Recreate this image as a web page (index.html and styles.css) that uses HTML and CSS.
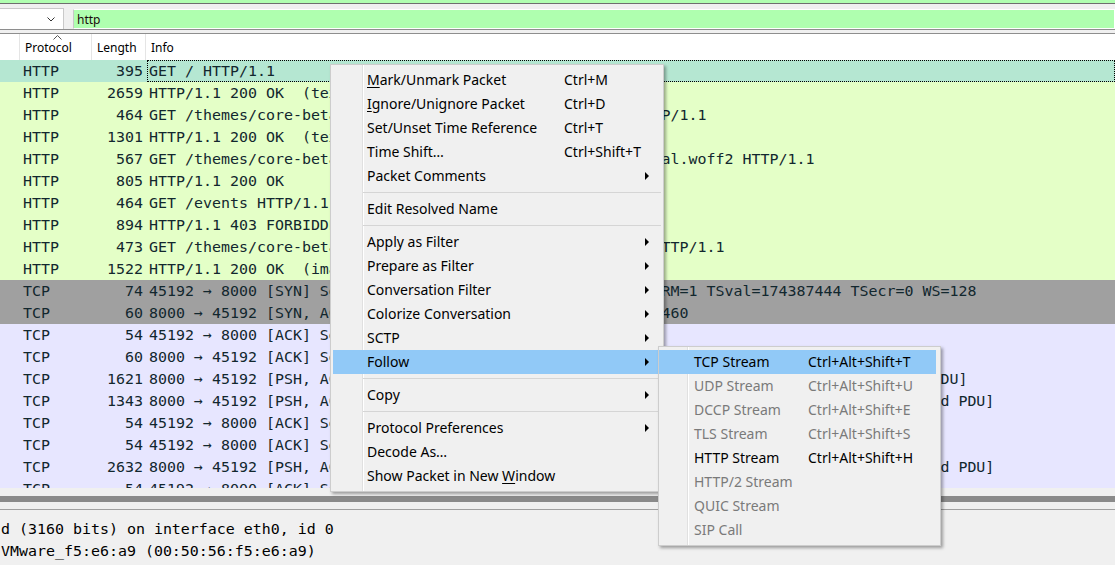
FILE: index.html
```html
<!DOCTYPE html>
<html>
<head>
<meta charset="utf-8">
<link rel="stylesheet" href="styles.css">
</head>
<body>
<div class="app">
  <div class="topstrip"></div>
  <div class="toolbar">
    <div class="combo">
      <svg class="chev" width="8" height="5" viewBox="0 0 8 5"><polyline points="0.5,0.5 4,4 7.5,0.5" fill="none" stroke="#333" stroke-width="1"/></svg>
    </div>
    <div class="filter">http</div>
  </div>
  <div class="gap"></div>
  <div class="header">
    <div class="h0"></div>
    <div class="hc hproto">Protocol<svg class="sort" width="9" height="5" viewBox="0 0 9 5"><polyline points="0.5,4.5 4.5,0.5 8.5,4.5" fill="none" stroke="#555" stroke-width="1"/></svg></div>
    <div class="hc hlen">Length</div>
    <div class="hc hinfo">Info</div>
  </div>
  <div class="rows">
    <div class="r h sel"><span class="c0"></span><span class="pr">HTTP</span><span class="ln">395</span><span class="in focus">GET / HTTP/1.1</span></div>
    <div class="r h"><span class="c0"></span><span class="pr">HTTP</span><span class="ln">2659</span><span class="in">HTTP/1.1 200 OK  (text/html)</span></div>
    <div class="r h"><span class="c0"></span><span class="pr">HTTP</span><span class="ln">464</span><span class="in">GET /themes/core-beta/static/assets/main.06a2a5b1.css HTTP/1.1</span></div>
    <div class="r h"><span class="c0"></span><span class="pr">HTTP</span><span class="ln">1301</span><span class="in">HTTP/1.1 200 OK  (text/css)</span></div>
    <div class="r h"><span class="c0"></span><span class="pr">HTTP</span><span class="ln">567</span><span class="in">GET /themes/core-beta/static/webfonts/lato-latin-400-normal.woff2 HTTP/1.1</span></div>
    <div class="r h"><span class="c0"></span><span class="pr">HTTP</span><span class="ln">805</span><span class="in">HTTP/1.1 200 OK</span></div>
    <div class="r h"><span class="c0"></span><span class="pr">HTTP</span><span class="ln">464</span><span class="in">GET /events HTTP/1.1</span></div>
    <div class="r h"><span class="c0"></span><span class="pr">HTTP</span><span class="ln">894</span><span class="in">HTTP/1.1 403 FORBIDDEN  (text/html)</span></div>
    <div class="r h"><span class="c0"></span><span class="pr">HTTP</span><span class="ln">473</span><span class="in">GET /themes/core-beta/static/img/favicon.ico?d=8b5f4a21 HTTP/1.1</span></div>
    <div class="r h"><span class="c0"></span><span class="pr">HTTP</span><span class="ln">1522</span><span class="in">HTTP/1.1 200 OK  (image/png)</span></div>
    <div class="r g"><span class="c0"></span><span class="pr">TCP</span><span class="ln">74</span><span class="in">45192 → 8000 [SYN] Seq=0 Win=64240 Len=0 MSS=1460 SACK_PERM=1 TSval=174387444 TSecr=0 WS=128</span></div>
    <div class="r g"><span class="c0"></span><span class="pr">TCP</span><span class="ln">60</span><span class="in">8000 → 45192 [SYN, ACK] Seq=0 Ack=1 Win=64240 Len=0 MSS=1460</span></div>
    <div class="r t"><span class="c0"></span><span class="pr">TCP</span><span class="ln">54</span><span class="in">45192 → 8000 [ACK] Seq=1 Ack=1 Win=64240 Len=0</span></div>
    <div class="r t"><span class="c0"></span><span class="pr">TCP</span><span class="ln">60</span><span class="in">8000 → 45192 [ACK] Seq=1 Ack=400 Win=63841 Len=0</span></div>
    <div class="r t"><span class="c0"></span><span class="pr">TCP</span><span class="ln">1621</span><span class="in">8000 → 45192 [PSH, ACK] Seq=1 Ack=400 Win=64128 Len=1567 [TCP segment of a reassembled PDU]</span></div>
    <div class="r t"><span class="c0"></span><span class="pr">TCP</span><span class="ln">1343</span><span class="in">8000 → 45192 [PSH, ACK] Seq=1568 Ack=400 Win=64128 Len=1289 [TCP segment of a reassembled PDU]</span></div>
    <div class="r t"><span class="c0"></span><span class="pr">TCP</span><span class="ln">54</span><span class="in">45192 → 8000 [ACK] Seq=400 Ack=1568 Win=63488 Len=0</span></div>
    <div class="r t"><span class="c0"></span><span class="pr">TCP</span><span class="ln">54</span><span class="in">45192 → 8000 [ACK] Seq=400 Ack=2857 Win=62592 Len=0</span></div>
    <div class="r t"><span class="c0"></span><span class="pr">TCP</span><span class="ln">2632</span><span class="in">8000 → 45192 [PSH, ACK] Seq=2857 Ack=400 Win=64128 Len=2578 [TCP segment of a reassembled PDU]</span></div>
    <div class="r t"><span class="c0"></span><span class="pr">TCP</span><span class="ln">54</span><span class="in">45192 → 8000 [ACK] Seq=400 Ack=5435 Win=62592 Len=0</span></div>
  </div>
  <div class="split"><div class="split-bar"></div></div>
  <div class="details">
    <div class="d">d (3160 bits) on interface eth0, id 0</div>
    <div class="d">VMware_f5:e6:a9 (00:50:56:f5:e6:a9)</div>
  </div>
</div>

<div class="menu">
  <div class="item"><span class="lbl"><u>M</u>ark/Unmark Packet</span><span class="key">Ctrl+M</span></div>
  <div class="item"><span class="lbl"><u>I</u>gnore/Unignore Packet</span><span class="key">Ctrl+D</span></div>
  <div class="item"><span class="lbl">Set/Unset Time Reference</span><span class="key">Ctrl+T</span></div>
  <div class="item"><span class="lbl">Time Shift…</span><span class="key">Ctrl+Shift+T</span></div>
  <div class="item"><span class="lbl">Packet Comments</span><span class="key"></span><span class="arr"></span></div>
  <div class="sep"></div>
  <div class="item"><span class="lbl">Edit Resolved Name</span><span class="key"></span></div>
  <div class="sep"></div>
  <div class="item"><span class="lbl">Apply as Filter</span><span class="key"></span><span class="arr"></span></div>
  <div class="item"><span class="lbl">Prepare as Filter</span><span class="key"></span><span class="arr"></span></div>
  <div class="item"><span class="lbl">Conversation Filter</span><span class="key"></span><span class="arr"></span></div>
  <div class="item"><span class="lbl">Colorize Conversation</span><span class="key"></span><span class="arr"></span></div>
  <div class="item"><span class="lbl">SCTP</span><span class="key"></span><span class="arr"></span></div>
  <div class="item hl"><span class="lbl">Follow</span><span class="key"></span><span class="arr"></span></div>
  <div class="sep"></div>
  <div class="item"><span class="lbl">Copy</span><span class="key"></span><span class="arr"></span></div>
  <div class="sep"></div>
  <div class="item"><span class="lbl">Protocol Preferences</span><span class="key"></span><span class="arr"></span></div>
  <div class="item"><span class="lbl">Decode As…</span><span class="key"></span></div>
  <div class="item"><span class="lbl">Show Packet in New <u>W</u>indow</span><span class="key"></span></div>
</div>

<div class="menu sub">
  <div class="item hl"><span class="lbl">TCP Stream</span><span class="key">Ctrl+Alt+Shift+T</span></div>
  <div class="item dis"><span class="lbl">UDP Stream</span><span class="key">Ctrl+Alt+Shift+U</span></div>
  <div class="item dis"><span class="lbl">DCCP Stream</span><span class="key">Ctrl+Alt+Shift+E</span></div>
  <div class="item dis"><span class="lbl">TLS Stream</span><span class="key">Ctrl+Alt+Shift+S</span></div>
  <div class="item"><span class="lbl">HTTP Stream</span><span class="key">Ctrl+Alt+Shift+H</span></div>
  <div class="item dis"><span class="lbl">HTTP/2 Stream</span><span class="key"></span></div>
  <div class="item dis"><span class="lbl">QUIC Stream</span><span class="key"></span></div>
  <div class="item dis"><span class="lbl">SIP Call</span><span class="key"></span></div>
</div>
</body>
</html>
```

FILE: styles.css
```css
html, body {
  margin: 0;
  padding: 0;
}
body {
  width: 1115px;
  height: 565px;
  overflow: hidden;
  position: relative;
  background: #f0f0f0;
  font-family: "Noto Sans", "DejaVu Sans", sans-serif;
  color: #000;
}
.app {
  display: flex;
  flex-direction: column;
  width: 1115px;
  height: 565px;
  overflow: hidden;
}
.topstrip {
  height: 3px;
  flex: none;
  background: #b0ffb0;
  border-bottom: 1px solid #6e6e6e;
}
.toolbar {
  height: 25px;
  flex: none;
  display: flex;
  align-items: flex-start;
  background: #f0f0f0;
  border-bottom: 1px solid #8e8e8e;
}
.combo {
  box-sizing: border-box;
  width: 64px;
  height: 21px;
  margin-top: 4px;
  background: #fff;
  border: 1px solid #c9c9c9;
  border-left: none;
  border-bottom: none;
  display: flex;
  align-items: center;
  justify-content: flex-end;
  padding-right: 8px;
}
.chev {
  display: block;
  margin-top: 1px;
}
.filter {
  box-sizing: border-box;
  flex: 1;
  height: 20px;
  margin-top: 5px;
  margin-left: 9px;
  background: #afffaf;
  border: 1px solid #fff;
  border-left-color: #c8c8c8;
  font-size: 12px;
  line-height: 18px;
  padding-left: 3px;
  padding-top: 1px;
  color: #1a0a0a;
}
.gap {
  height: 3px;
  flex: none;
}
.header {
  height: 26px;
  flex: none;
  display: flex;
  background: #fff;
  border-top: 1px solid #8e8e8e;
  font-size: 12px;
  color: #000;
}
.h0 {
  width: 19px;
  flex: none;
}
.hc {
  position: relative;
  border-left: 1px solid #e5e5e5;
  padding-left: 5px;
  padding-top: 1px;
  line-height: 26px;
  flex: none;
}
.hproto { width: 66px; }
.hlen { width: 48px; }
.hinfo { flex: 1; }
.sort {
  position: absolute;
  left: 33px;
  top: 1px;
}
.rows {
  height: 428px;
  flex: none;
  overflow: hidden;
  font-family: "DejaVu Sans Mono", "Liberation Mono", monospace;
  font-size: 14.95px;
  color: #12272e;
}
.r {
  height: 22px;
  line-height: 22px;
  display: flex;
  white-space: pre;
}
.r.h { background: #e4ffc7; }
.r.g { background: #a0a0a0; }
.r.t { background: #e7e6ff; }
.r.sel { background: #b5e7d2; }
.c0 { width: 19px; flex: none; }
.pr { width: 68px; padding-left: 4px; flex: none; }
.ln { width: 52px; padding-right: 4px; text-align: right; flex: none; }
.in { flex: 1; padding-left: 2px; }
.in.focus {
  box-sizing: border-box;
  border: 1px dotted #000;
  padding-left: 1px;
  line-height: 20px;
}
.split {
  height: 21px;
  flex: none;
  padding-top: 8px;
  box-sizing: border-box;
  background: #f0f0f0;
}
.split-bar {
  height: 6px;
  background: #8a8a8a;
}
.details {
  flex: 1;
  border-top: 1px solid #a0a0a0;
  background: #f0f0f0;
  padding-top: 8px;
  padding-left: 1px;
  font-family: "DejaVu Sans Mono", "Liberation Mono", monospace;
  font-size: 14.95px;
  color: #000;
}
.d {
  height: 22px;
  line-height: 22px;
  white-space: pre;
}

/* context menu */
.menu {
  position: absolute;
  left: 330px;
  top: 64px;
  width: 334px;
  box-sizing: border-box;
  padding: 3px 0 3px 2px;
  border: 1px solid #cdcdcd;
  background: linear-gradient(to right, transparent 31px, #e0e0e0 31px, #e0e0e0 32px, #ffffff 32px, #ffffff 33px, transparent 33px), #f0f0f0;
  box-shadow: 2px 2px 3px rgba(0, 0, 0, 0.35);
  font-size: 14px;
  color: #000;
}
.item {
  box-sizing: border-box;
  height: 24px;
  padding-bottom: 2px;
  display: flex;
  align-items: center;
  padding-left: 34px;
  margin-right: 5px;
  white-space: nowrap;
}
.item.hl { background: #91c9f7; }
.lbl { width: 197px; flex: none; }
.key { flex: 1; }
.arr {
  width: 0;
  height: 0;
  border-left: 4px solid #000;
  border-top: 4px solid transparent;
  border-bottom: 4px solid transparent;
  margin-right: 9px;
  margin-top: 2px;
}
u {
  text-underline-offset: 2px;
}
.sep {
  height: 9px;
  display: flex;
  align-items: center;
  margin-left: 30px;
  margin-right: 2px;
}
.sep::before {
  content: "";
  flex: 1;
  height: 1px;
  background: #d5d5d5;
}
.sub {
  left: 658px;
  top: 346px;
  width: 283px;
  padding-left: 0;
  background: linear-gradient(to right, transparent 28px, #e0e0e0 28px, #e0e0e0 29px, #ffffff 29px, #ffffff 30px, transparent 30px), #f0f0f0;
}
.sub .item {
  padding-left: 35px;
  margin-right: 4px;
}
.sub .lbl { width: 114px; }
.item.dis { color: #7a7a7a; }
```
